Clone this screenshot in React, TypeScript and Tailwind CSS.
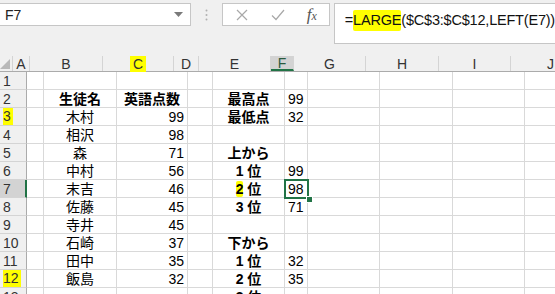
import React from "react";

const COLS: { key: string; w: number }[] = [
  { key: "A", w: 17 },
  { key: "B", w: 73 },
  { key: "C", w: 71 },
  { key: "D", w: 25 },
  { key: "E", w: 72 },
  { key: "F", w: 23 },
  { key: "G", w: 72 },
  { key: "H", w: 73 },
  { key: "I", w: 72 },
  { key: "J", w: 80 },
];

type Cell = { t: React.ReactNode; align?: "l" | "c" | "r"; bold?: boolean };
type Row = Record<string, Cell>;

const Hl = ({ children }: { children: React.ReactNode }) => (
  <span className="bg-[#ffff00] rounded-[2px]">{children}</span>
);

const rows: Row[] = [
  {},
  {
    B: { t: "生徒名", align: "c", bold: true },
    C: { t: "英語点数", align: "c", bold: true },
    E: { t: "最高点", align: "c", bold: true },
    F: { t: "99", align: "l" },
  },
  {
    B: { t: "木村", align: "c" },
    C: { t: "99", align: "r" },
    E: { t: "最低点", align: "c", bold: true },
    F: { t: "32", align: "l" },
  },
  { B: { t: "相沢", align: "c" }, C: { t: "98", align: "r" } },
  {
    B: { t: "森", align: "c" },
    C: { t: "71", align: "r" },
    E: { t: "上から", align: "c", bold: true },
  },
  {
    B: { t: "中村", align: "c" },
    C: { t: "56", align: "r" },
    E: { t: "1 位", align: "c", bold: true },
    F: { t: "99", align: "l" },
  },
  {
    B: { t: "末吉", align: "c" },
    C: { t: "46", align: "r" },
    E: {
      t: (
        <>
          <Hl>2</Hl>
          {" 位"}
        </>
      ),
      align: "c",
      bold: true,
    },
    F: { t: "98", align: "l" },
  },
  {
    B: { t: "佐藤", align: "c" },
    C: { t: "45", align: "r" },
    E: { t: "3 位", align: "c", bold: true },
    F: { t: "71", align: "l" },
  },
  { B: { t: "寺井", align: "c" }, C: { t: "45", align: "r" } },
  {
    B: { t: "石崎", align: "c" },
    C: { t: "37", align: "r" },
    E: { t: "下から", align: "c", bold: true },
  },
  {
    B: { t: "田中", align: "c" },
    C: { t: "35", align: "r" },
    E: { t: "1 位", align: "c", bold: true },
    F: { t: "32", align: "l" },
  },
  {
    B: { t: "飯島", align: "c" },
    C: { t: "32", align: "r" },
    E: { t: "2 位", align: "c", bold: true },
    F: { t: "35", align: "l" },
  },
  { E: { t: "3 位", align: "c", bold: true } },
];

const FONT = {
  fontFamily: '"Liberation Sans", "Noto Sans CJK JP", sans-serif',
};

export default function App() {
  return (
    <div
      className="w-[555px] h-[294px] overflow-hidden bg-[#f0f0f0] text-[#000]"
      style={FONT}
    >
      {/* Toolbar */}
      <div className="h-[56px] flex items-start pt-[3px]">
        <div className="w-[193px] h-[23px] bg-white border border-[#c6c6c6] border-l-0 flex items-center justify-between pl-[5px] pr-[7px]">
          <span className="text-[14px] text-[#222] leading-none">F7</span>
          <svg width="9" height="5" viewBox="0 0 9 5">
            <path d="M0 0 L9 0 L4.5 5 Z" fill="#7a7a7a" />
          </svg>
        </div>
        <div className="w-[31px] h-[23px] flex items-center justify-center">
          <svg width="3" height="12" viewBox="0 0 3 12">
            <circle cx="1.5" cy="1.5" r="1" fill="#b0b0b0" />
            <circle cx="1.5" cy="6" r="1" fill="#b0b0b0" />
            <circle cx="1.5" cy="10.5" r="1" fill="#b0b0b0" />
          </svg>
        </div>
        <div className="w-[109px] h-[23px] bg-white border border-[#c6c6c6] flex items-center pl-[13px]">
          <svg width="12" height="12" viewBox="0 0 12 12">
            <path d="M1 1 L11 11 M11 1 L1 11" stroke="#a8a8a8" strokeWidth="1.2" />
          </svg>
          <svg width="14" height="12" viewBox="0 0 14 12" className="ml-[23px]">
            <path d="M1 6.5 L5 10.5 L13 1" stroke="#a8a8a8" strokeWidth="1.2" fill="none" />
          </svg>
          <span
            className="ml-[22px] text-[17px] italic text-[#555] leading-none"
            style={{ fontFamily: '"Liberation Serif", serif' }}
          >
            f<span className="text-[12px]">x</span>
          </span>
        </div>
        <div className="ml-[4px] flex-1 h-[41px] bg-white border border-[#c6c6c6] border-r-0 pl-[10px] pt-[4px]">
          <span className="text-[14.5px] leading-[20px] text-[#111] whitespace-nowrap tracking-[-0.2px]">
            =<span className="bg-[#ffff00] inline-block leading-[21px] rounded-[2px]">LARGE</span>($C$3:$C$12,LEFT(E7))
          </span>
        </div>
      </div>

      {/* Column headers */}
      <div className="flex h-[16px] border-b border-[#ababab] bg-[#f0f0f0]">
        <div className="w-[27px] h-full border-r border-[#d4d4d4] flex items-end justify-end pr-[2px] pb-[2px]">
          <svg width="10" height="10" viewBox="0 0 10 10">
            <path d="M10 0 L10 10 L0 10 Z" fill="#b8b8b8" />
          </svg>
        </div>
        {COLS.map((c) => {
          const sel = c.key === "F";
          return (
            <div
              key={c.key}
              className={
                "h-full shrink-0 flex items-center justify-center text-[14px] leading-none border-r border-[#d4d4d4] " +
                (sel ? "bg-[#d3d3d3] border-b-2 border-b-[#217346] text-[#2a5a3e]" : "text-[#333]")
              }
              style={{ width: c.w }}
            >
              {c.key === "C" ? (
                <span className="bg-[#ffff00] px-[3px] leading-[16px]">C</span>
              ) : (
                c.key
              )}
            </div>
          );
        })}
      </div>

      {/* Rows */}
      <div className="relative bg-white">
        {rows.map((r, i) => {
          const n = i + 1;
          const selRow = n === 7;
          return (
            <div key={n} className="flex h-[18px]">
              <div
                className={
                  "w-[27px] shrink-0 h-full flex items-end pl-[3px] text-[14px] leading-[16px] border-b border-[#d4d4d4] " +
                  (selRow
                    ? "bg-[#d3d3d3] border-r-2 border-r-[#217346] text-[#333]"
                    : "bg-[#f0f0f0] border-r border-r-[#ababab] text-[#333]")
                }
              >
                {n === 3 || n === 12 ? (
                  <span className="bg-[#ffff00] pr-[2px] leading-[17px]">{n}</span>
                ) : (
                  n
                )}
              </div>
              {COLS.map((c) => {
                const cell = r[c.key];
                const al = cell?.align;
                return (
                  <div
                    key={c.key}
                    className={
                      "shrink-0 h-full flex items-end border-r border-b border-[#d9d9d9] text-[14px] leading-[16px] whitespace-pre overflow-visible " +
                      (al === "c"
                        ? "justify-center"
                        : al === "r"
                        ? "justify-end pr-[3px]"
                        : "justify-start pl-[3px]") +
                      (cell?.bold ? " font-bold" : "")
                    }
                    style={{ width: c.w }}
                  >
                    {cell?.t}
                  </div>
                );
              })}
            </div>
          );
        })}
        {/* Selection F7 */}
        <div className="absolute left-[284px] top-[107px] w-[25px] h-[20px] border-2 border-[#217346] pointer-events-none" />
        <div className="absolute left-[306px] top-[124px] w-[5px] h-[5px] bg-[#217346] border border-white box-content" />
      </div>
    </div>
  );
}
